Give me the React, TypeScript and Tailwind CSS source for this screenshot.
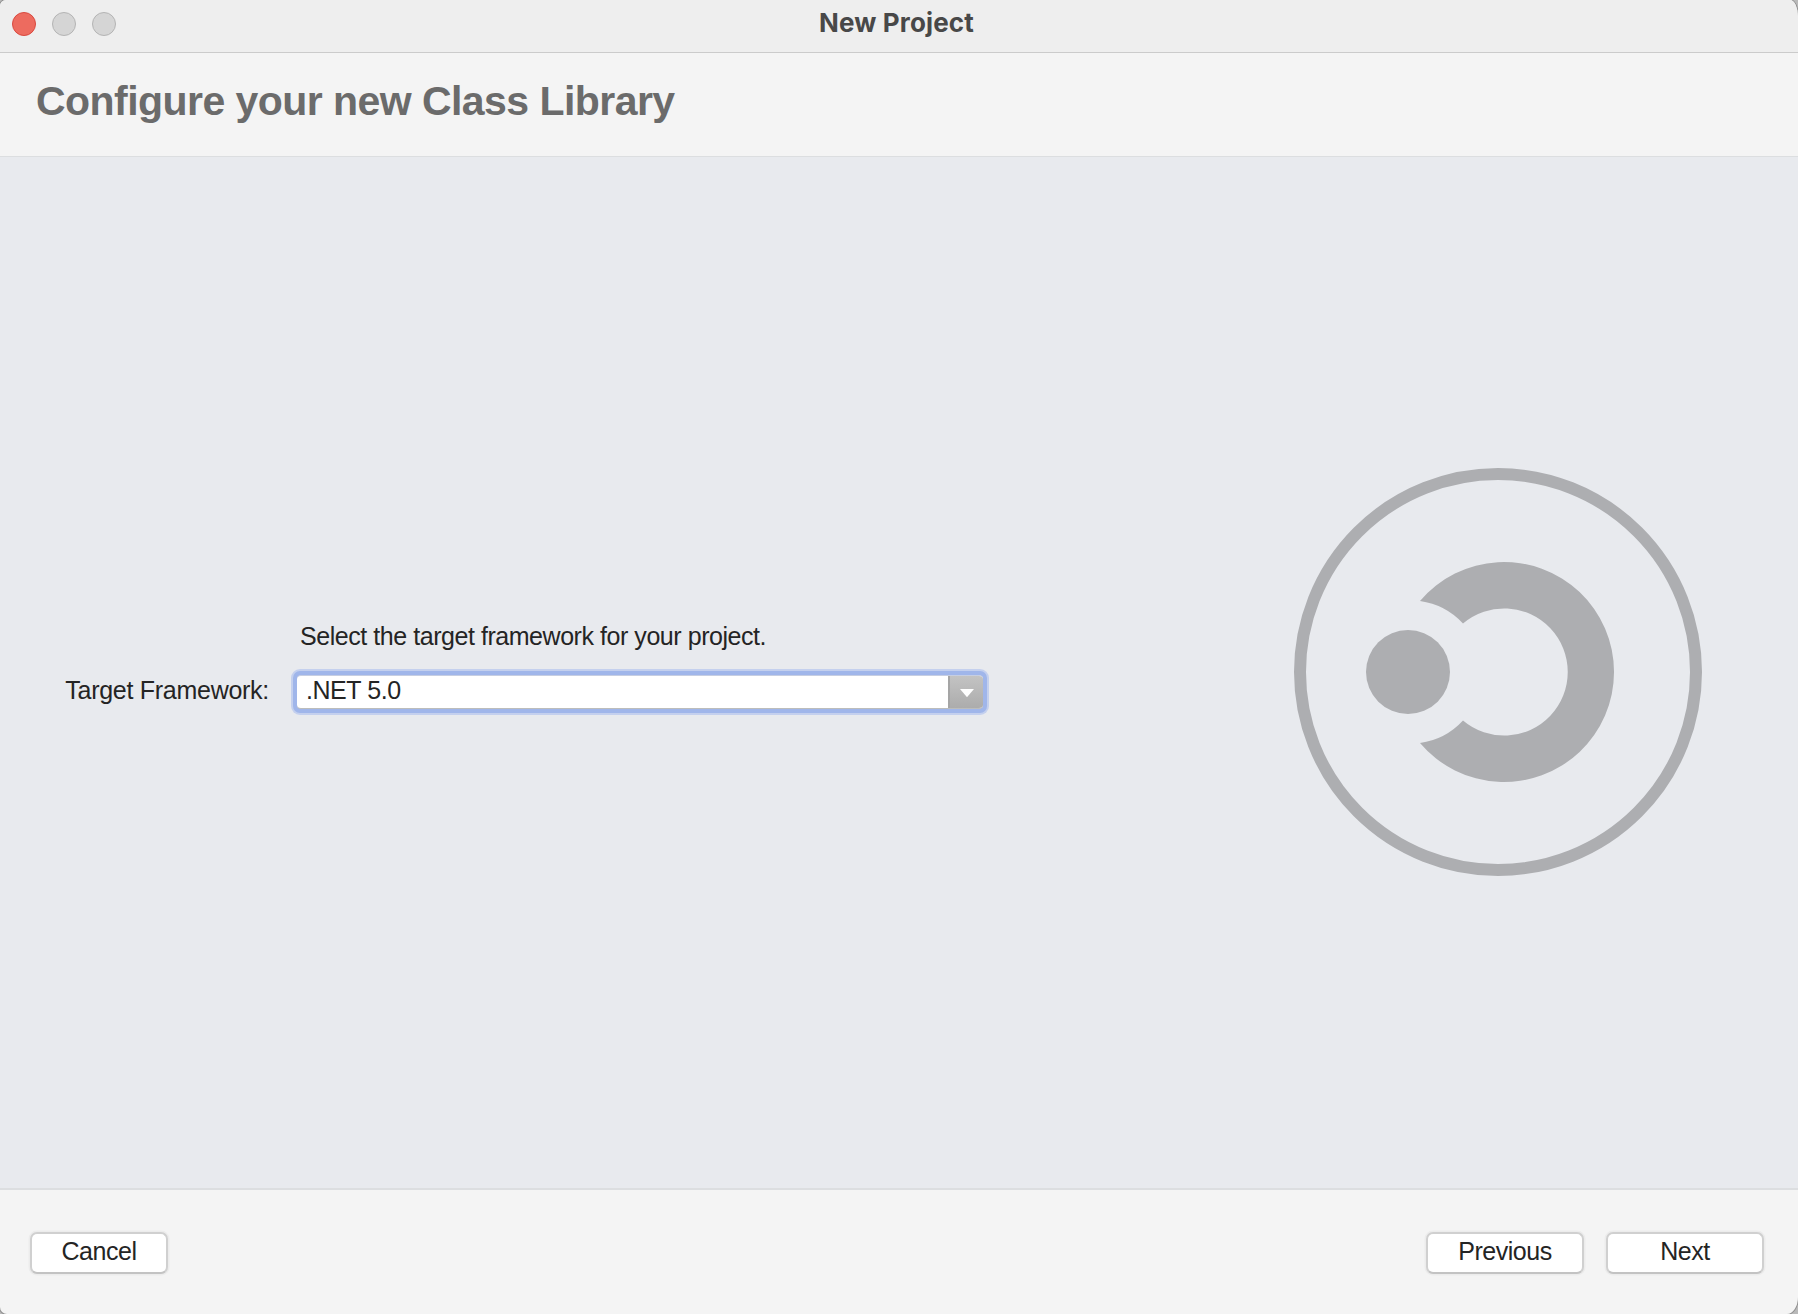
import type { ReactNode } from "react";

function TrafficLight({ active = false }: { active?: boolean }) {
  return (
    <span
      className={
        active
          ? "size-6 rounded-full border border-[#d9493f] bg-[#ed6b5f]"
          : "size-6 rounded-full border border-[#b4b4b4] bg-[#d5d5d5]"
      }
    />
  );
}

function TitleBar() {
  return (
    <header className="grid h-[53px] shrink-0 grid-cols-3 items-start border-b border-[#cbcbcb] bg-[#eeeeee]">
      <div className="flex gap-4 pt-3 pl-3">
        <TrafficLight active />
        <TrafficLight />
        <TrafficLight />
      </div>
      <h1 className="pt-[7px] pr-[5px] text-center font-['Inter',sans-serif] text-[26px] leading-8 font-bold tracking-[0.15px] text-[#484848]">
        New Project
      </h1>
    </header>
  );
}

function PushButton({ wide = false, children }: { wide?: boolean; children: ReactNode }) {
  return (
    <button
      className={`flex h-[42px] justify-center rounded-[7px] border-2 border-[#d0d0d0] border-b-[#c3c3c3] bg-white pt-[3px] text-[25px] leading-7 tracking-[-0.45px] text-[#242424] shadow-[0_0_0_1.5px_#ececec] ${
        wide ? "w-[158px]" : "w-[138px]"
      }`}
    >
      {children}
    </button>
  );
}

function FrameworkSelect() {
  return (
    <div className="h-[46px] w-[698px] rounded-[9px] bg-[#c4d0ee] p-[2px]">
      <div className="h-full rounded-[7px] bg-[#a0b6ea] p-1">
        <div className="flex h-[34px] overflow-hidden rounded-[4px] border-t border-b border-t-[#c6cee2] border-b-[#bcbdbb] bg-white">
          <span className="flex-1 pl-[9px] text-[25px] leading-7 tracking-[-0.45px] text-[#242424]">
            .NET 5.0
          </span>
          <span className="flex w-[35px] items-center justify-center border-l-2 border-[#a5a5a5] bg-linear-to-b from-[#c3c3c3] to-[#acacac]">
            <svg className="mt-0.5 h-[8px] w-[14px]" viewBox="0 0 14 8">
              <path d="M0 0h14L7 8.2z" fill="#fff" />
            </svg>
          </span>
        </div>
      </div>
    </div>
  );
}

function ProjectLogo() {
  return (
    <svg className="size-[408px]" viewBox="0 0 408 408" fill="#adaeb1">
      <circle cx="204" cy="204" r="198" fill="none" stroke="#adaeb1" strokeWidth="12" />
      <circle cx="114" cy="204" r="42" />
      <path d="M126 133A110 110 0 1 1 126 275A72 72 0 0 0 169 252.5A63.6 63.6 0 1 0 169 155.5A72 72 0 0 0 126 133Z" />
    </svg>
  );
}

export default function App() {
  return (
    <div className="h-[1314px] w-[1798px] bg-[#b9b9b9] font-['Liberation_Sans',Arial,sans-serif]">
      <div className="flex h-full flex-col overflow-hidden rounded-tl-[6px] rounded-tr-[8px_17px] rounded-br-[11px_17px] rounded-bl-[7px] bg-[#f4f4f4] shadow-[0_0_0_1px_#8f8f8f]">
        <TitleBar />
        <div className="h-[104px] shrink-0 border-b border-[#dcdee0] pt-[25px] pl-9">
          <h2 className="text-[41px] leading-[46px] font-bold tracking-[-0.55px] text-[#6b6b6b]">
            Configure your new Class Library
          </h2>
        </div>
        <main className="flex h-[1031px] shrink-0 items-center justify-between bg-[#e8eaee] pr-24 pb-[2px]">
          <div className="grid grid-cols-[291px_auto] pb-[7px] text-[25px] leading-7 text-[#242424]">
            <p className="col-start-2 pb-[19px] pl-[9px] tracking-[-0.45px]">
              Select the target framework for your project.
            </p>
            <label className="self-center pr-[22px] pb-1 text-right tracking-[-0.28px]">
              Target Framework:
            </label>
            <FrameworkSelect />
          </div>
          <ProjectLogo />
        </main>
        <footer className="flex flex-1 items-start justify-between border-t-2 border-[#dcdee0] pt-[42px] pr-[34px] pl-[30px]">
          <PushButton>Cancel</PushButton>
          <div className="flex gap-[22px]">
            <PushButton wide>Previous</PushButton>
            <PushButton wide>Next</PushButton>
          </div>
        </footer>
      </div>
    </div>
  );
}
